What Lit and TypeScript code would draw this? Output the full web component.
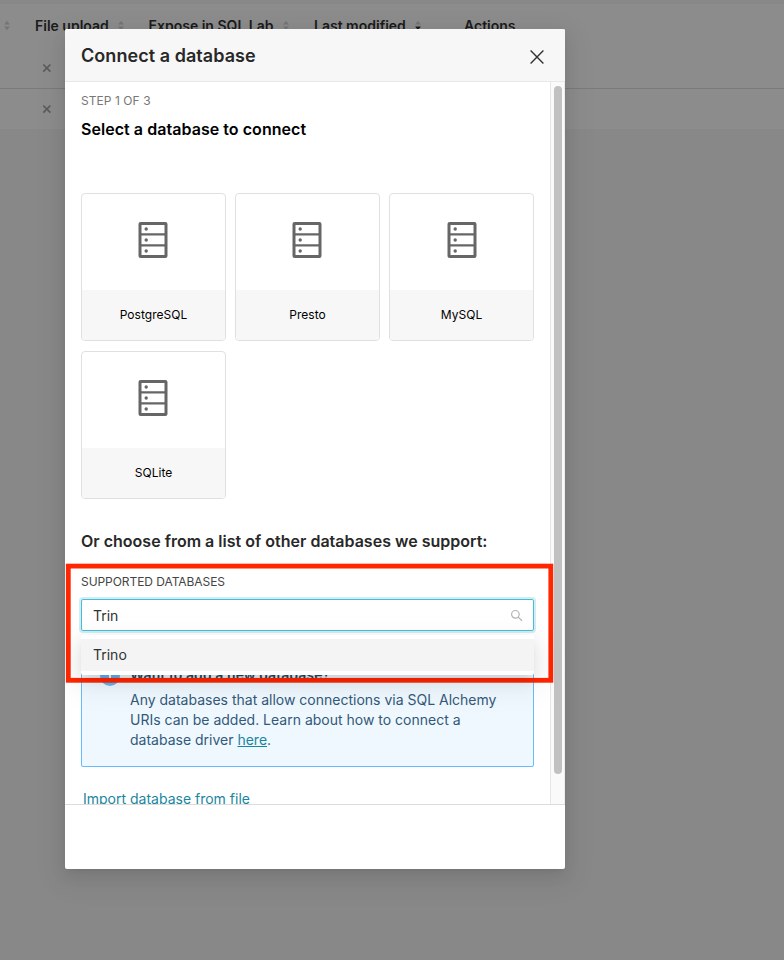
import { LitElement, html, svg, css } from "lit";
import { customElement, property } from "lit/decorators.js";

@customElement("sort-icon")
class SortIcon extends LitElement {
  @property({ type: Boolean }) desc = false;
  static styles = css`
    :host { display: block; width: 8px; height: 12px; }
    svg { display: block; }
  `;
  render() {
    return html`<svg width="8" height="12" viewBox="0 0 8 12">
      <path d="M4 .8 6.9 4.6H1.1Z" fill="#757575"/>
      <path d="M1.1 6.4H6.9L4 10.2Z" fill=${this.desc ? "#1b1b1b" : "#757575"}/>
    </svg>`;
  }
}

@customElement("db-card")
class DbCard extends LitElement {
  @property() name = "";
  static styles = css`
    :host {
      display: flex; flex-direction: column; box-sizing: border-box;
      height: 148px; border: 1px solid #e0e0e0; border-radius: 4px; overflow: hidden;
    }
    .art { flex: 1; display: flex; justify-content: center; padding: 28px 1px 0 0; }
    :host(:nth-child(3)) .art { padding-right: 0; }
    .label {
      height: 50px; background: #f7f7f7; color: #000;
      font-size: 12px; line-height: 49px; text-align: center; letter-spacing: 0.02px;
    }
    svg { display: block; }
  `;
  render() {
    return html`
      <div class="art">
        <svg width="30" height="36" viewBox="0 0 30 36">
          <rect x="2" y="1.5" width="26" height="33" rx=".6" fill="none" stroke="#666" stroke-width="3"/>
          ${[12.4, 23.4].map((y) => svg`<path d="M2 ${y}H28" stroke="#666" stroke-width="2.2"/>`)}
          ${[7, 18, 29].map((y) => svg`<circle cx="8.2" cy=${y} r="1.7" fill="#666"/>`)}
        </svg>
      </div>
      <div class="label">${this.name}</div>`;
  }
}

@customElement("app-root")
class AppRoot extends LitElement {
  static styles = css`
    :host {
      display: block; position: relative; width: 784px; height: 960px; overflow: hidden;
      background: #888; font-family: Inter, "Liberation Sans", sans-serif; color: #323232;
      font-size: 14px;
    }
    .table { padding-top: 4px; }
    .row { box-sizing: border-box; background: #8c8c8c; height: 40px; padding: 13px 0 0 42px; }
    .row.first { height: 41px; border-bottom: 1px solid #7a7a7a; }
    .row svg { display: block; }
    .head {
      background: #8c8c8c; height: 44px; display: grid; box-sizing: border-box;
      grid-template-columns: 32px 113.5px 165.5px 150px 1fr; padding: 11px 0 0 3px;
      font-weight: 600; color: #1b1b1b; line-height: 21px; white-space: nowrap;
    }
    .th { display: flex; gap: 8px; }
    .th sort-icon { margin-top: 5px; }
    .modal {
      position: absolute; left: 65px; top: 29px; width: 500px; height: 840px;
      display: flex; flex-direction: column; background: #fff; border-radius: 2px; overflow: hidden;
    }
    .shade {
      position: absolute; left: 65px; top: 29px; width: 500px; height: 840px; border-radius: 2px;
      box-shadow: 0 3px 6px -4px rgba(0,0,0,.12), 0 6px 16px rgba(0,0,0,.08), 0 9px 28px 8px rgba(0,0,0,.05);
    }
    .top {
      height: 53px; box-sizing: border-box; background: #f7f7f7; border-bottom: 1px solid #e8e8e8;
      display: flex; justify-content: space-between; align-items: center; padding: 0 20px 0 16px; flex: none;
    }
    .title { font-size: 18px; font-weight: 600; color: #282828; letter-spacing: 0.05px; }
    .top svg { margin-top: 3px; }
    .body { height: 722px; display: flex; overflow: hidden; flex: none; }
    .content { width: 453px; padding: 0 16px; flex: none; }
    .track {
      width: 15px; box-sizing: border-box; background: #fafafa; border-left: 1px solid #e6e6e6;
      border-right: 1px solid #ececec; padding: 4px 3px 0; flex: none;
    }
    .thumb { height: 688px; width: 8px; border-radius: 4px; background: #c1c1c1; }
    .foot { flex: 1; border-top: 1px solid #dcdcdc; }
    .step { font-size: 12px; color: #777; line-height: 18px; padding-top: 10px; letter-spacing: 0.06px; }
    h4, h5 { margin: 0; font-size: 16px; font-weight: 600; line-height: 24px; }
    h4 { color: #000; margin-top: 7px; letter-spacing: 0.05px; }
    h5 { color: #282828; margin-top: 30px; letter-spacing: 0.01px; }
    .cards { display: grid; grid-template-columns: repeat(3, 145px); gap: 10px 9px; margin-top: 52px; }
    .cap { font-size: 12px; line-height: 18px; color: #444; margin-top: 20px; letter-spacing: -0.06px; }
    .input {
      box-sizing: border-box; height: 32px; margin-top: 8px; border: 1px solid #45bed6; border-radius: 2px;
      box-shadow: 0 0 0 2px rgba(32,167,201,.2); display: flex; align-items: center;
      justify-content: space-between; padding: 0 10px 0 11px; color: #323232;
    }
    .anchor { position: relative; }
    .menu {
      position: absolute; z-index: 1; top: 36px; left: 0; width: 453px; height: 40px;
      box-sizing: border-box; padding: 4px 0; background: #fff; border-radius: 2px;
      box-shadow: 0 3px 6px -4px rgba(0,0,0,.12), 0 6px 16px rgba(0,0,0,.08), 0 9px 28px 8px rgba(0,0,0,.05);
    }
    .option { height: 32px; line-height: 32px; background: #f4f4f4; padding-left: 12px; color: #323232; }
    .alert {
      box-sizing: border-box; height: 118px; margin-top: 18px; border: 1px solid #66bcfe; border-radius: 2px;
      background: #eff8fe; display: flex; gap: 10px; padding: 15px 20px 0 18px; color: #33597a;
    }
    .alert svg { flex: none; margin-top: 1px; }
    .msg { line-height: 20px; white-space: nowrap; }
    .strong { font-weight: 600; color: #254565; height: 25px; letter-spacing: 0.07px; }
    .msg a { color: #1985a0; text-decoration: underline; }
    .import { color: #1985a0; line-height: 20px; margin: 22px 0 0 2px; }
    .highlight {
      position: absolute; left: 65px; top: 563px; width: 489px; height: 120px; display: block;
    }
  `;

  cross() {
    return html`<svg width="10" height="14" viewBox="0 0 10 14">
      <path d="M1.3 3.5 8.4 10.6M8.4 3.5 1.3 10.6" stroke="#5b5b5b" stroke-width="1.7"/></svg>`;
  }

  render() {
    return html`
      <div class="table">
        <div class="head">
          <div class="th"><sort-icon></sort-icon></div>
          <div class="th"><span>File upload</span><sort-icon></sort-icon></div>
          <div class="th"><span>Expose in SQL Lab</span><sort-icon></sort-icon></div>
          <div class="th"><span>Last modified</span><sort-icon desc></sort-icon></div>
          <div class="th"><span>Actions</span></div>
        </div>
        <div class="row first">${this.cross()}</div>
        <div class="row">${this.cross()}</div>
      </div>
      <div class="shade"></div>
      <div class="modal">
        <div class="top">
          <span class="title">Connect a database</span>
          <svg width="16" height="16" viewBox="0 0 16 16">
            <path d="M1.6 1.6 14.4 14.4M14.4 1.6 1.6 14.4" stroke="#323232" stroke-width="1.4"/>
          </svg>
        </div>
        <div class="body">
          <div class="content">
            <div class="step">STEP 1 OF 3</div>
            <h4>Select a database to connect</h4>
            <div class="cards">
              ${["PostgreSQL", "Presto", "MySQL", "SQLite"].map((n) => html`<db-card name=${n}></db-card>`)}
            </div>
            <h5>Or choose from a list of other databases we support:</h5>
            <div class="cap">SUPPORTED DATABASES</div>
            <div class="anchor">
              <div class="input">
                <span>Trin</span>
                <svg width="13" height="13" viewBox="0 0 13 13" fill="none" stroke="#b4b4b4" stroke-width="1.2">
                  <circle cx="5.4" cy="5.3" r="3.8"/><path d="M8.2 8.1 12 11.8"/>
                </svg>
              </div>
              <div class="menu"><div class="option">Trino</div></div>
            </div>
            <div class="alert">
              <svg width="20" height="20" viewBox="0 0 20 20">
                <circle cx="10" cy="10" r="10" fill="#66b3f5"/>
                <path d="M9 4.5h2v2H9zM9 8.5h2v7H9z" fill="#fff"/>
              </svg>
              <div class="msg">
                <div class="strong">Want to add a new database?</div>
                Any databases that allow connections via SQL Alchemy<br />URIs can be added. Learn about how to connect a<br />database driver <a>here</a>.
              </div>
            </div>
            <div class="import">Import database from file</div>
          </div>
          <div class="track"><div class="thumb"></div></div>
        </div>
        <div class="foot"></div>
      </div>
      <svg class="highlight" viewBox="0 0 489 120">
        <rect x="3.3" y="3.1" width="482.5" height="114.2" fill="none" stroke="#ff2600" stroke-width="4.8"/>
      </svg>
    `;
  }
}
